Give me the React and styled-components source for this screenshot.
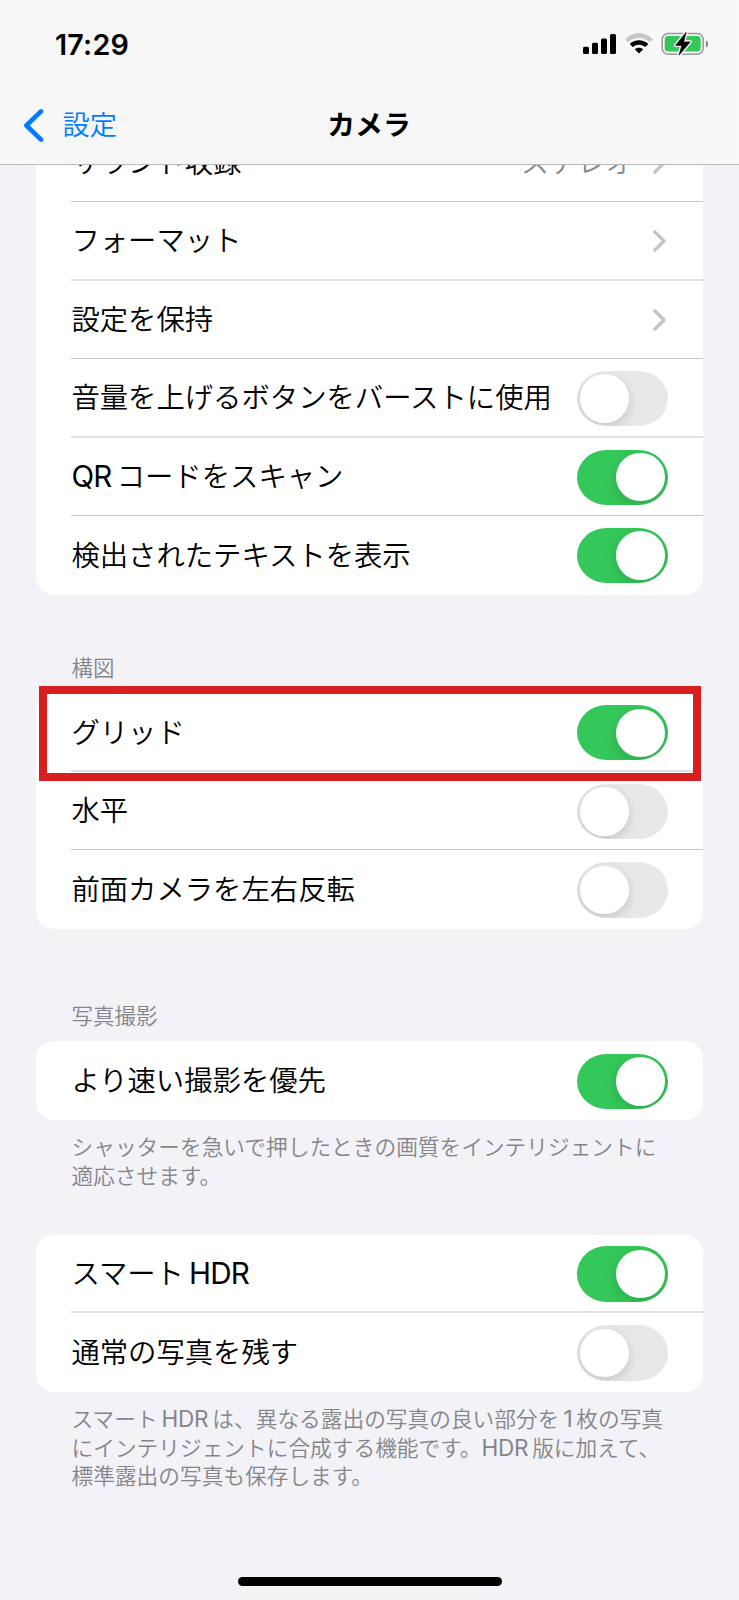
import React from "react";
import styled, { createGlobalStyle, css } from "styled-components";

const sections = [
  {
    id: "record",
    rows: [
      { label: "サウンド収録", value: "ステレオ", type: "link" },
      { label: "フォーマット", type: "link", soft: true },
      { label: "設定を保持", type: "link" },
      { label: "音量を上げるボタンをバーストに使用", type: "switch", soft: true },
      { latin: "QR", label: "コードをスキャン", type: "switch", on: true },
      { label: "検出されたテキストを表示", type: "switch", on: true },
    ],
  },
  {
    id: "composition",
    title: "構図",
    gap: 62.3,
    rows: [
      { label: "グリッド", type: "switch", on: true, marked: true, soft: true },
      { label: "水平", type: "switch" },
      { label: "前面カメラを左右反転", type: "switch" },
    ],
  },
  {
    id: "capture",
    title: "写真撮影",
    gap: 76,
    rows: [{ label: "より速い撮影を優先", type: "switch", on: true }],
    note: (
      <>
        シャッターを急いで押したときの画質をインテリジェントに
        <br />
        適応させます。
      </>
    ),
  },
  {
    id: "hdr",
    gap: 44.2,
    rows: [
      { label: "スマート", latinEnd: "HDR", type: "switch", on: true, soft: true },
      { label: "通常の写真を残す", type: "switch" },
    ],
    note: (
      <>
        スマート<NoteLatin>HDR</NoteLatin>は、異なる露出の写真の良い部分を
        <NoteLatin>1</NoteLatin>枚の写真
        <br />
        にインテリジェントに合成する機能です。<NoteLatin $flush>HDR</NoteLatin>
        版に加えて、
        <br />
        標準露出の写真も保存します。
      </>
    ),
  },
];

function NoteLatin(props) {
  return <Latin $small {...props} />;
}

const StatusIcons = () => (
  <Icons>
    <svg width="34" height="22" viewBox="0 0 34 22">
      <rect x="0" y="13.8" width="6" height="7.2" rx="1.5" />
      <rect x="9" y="9.8" width="6" height="11.2" rx="1.5" />
      <rect x="18" y="5.6" width="6" height="15.4" rx="1.5" />
      <rect x="27" y="1" width="6" height="20" rx="1.5" />
    </svg>
    <svg width="28" height="22" viewBox="0 0 28 22">
      <path
        d="M0.2 6.2C8-1.6 20-1.6 27.8 6.2L24.9 9.3C18.6 3.2 9.4 3.2 3.1 9.3Z"
        fill="#c6c6c7"
      />
      <path d="M4.7 11C9.9 6 18.1 6 23.3 11L20.3 14.1C16.7 10.8 11.3 10.8 7.7 14.1Z" />
      <path d="M9.8 16.2C12.2 14.2 15.8 14.2 18.2 16.2L14 20.6Z" />
    </svg>
    <svg width="48" height="26" viewBox="0 0 48 26">
      <rect
        x="1.2"
        y="2.4"
        width="41"
        height="20.8"
        rx="6"
        fill="none"
        stroke="#98989a"
        strokeWidth="1.5"
      />
      <rect x="3.7" y="5" width="36" height="15.6" rx="3.5" fill="#34c759" />
      <path d="M44.8 9.2C48 10.6 48 15 44.8 16.4Z" fill="#8b8b8d" />
      <path
        d="M25.2 1.2L14.5 14.4H20.8L18 24.2L29.2 10.9H22.7Z"
        stroke="#f7f7f7"
        strokeWidth="3.4"
        strokeLinejoin="round"
      />
      <path
        d="M25.2 1.2L14.5 14.4H20.8L18 24.2L29.2 10.9H22.7Z"
        stroke="#000"
        strokeWidth="0.6"
        strokeLinejoin="round"
      />
    </svg>
  </Icons>
);

const Chevron = () => (
  <ChevronIcon width="15" height="24" viewBox="0 0 15 24" fill="none">
    <path
      d="M2.8 2.9L12 12L2.8 21.1"
      stroke="#c4c4c6"
      strokeWidth="3.4"
      strokeLinecap="round"
      strokeLinejoin="round"
    />
  </ChevronIcon>
);

const SettingRow = ({
  label,
  latin,
  latinEnd,
  value,
  type,
  on,
  soft,
  marked,
  last,
}) => (
  <Row>
    <RowBody $last={last} $soft={soft}>
      <Label>
        {latin && <Latin $lead>{latin}</Latin>}
        {label}
        {latinEnd && <Latin>{latinEnd}</Latin>}
      </Label>
      {value && <Value>{value}</Value>}
      {type === "link" ? (
        <Chevron />
      ) : (
        <Switch type="button" role="switch" aria-checked={!!on} $on={on}>
          <Knob />
        </Switch>
      )}
    </RowBody>
    {marked && <Marker />}
  </Row>
);

const App = () => {
  return (
    <Screen>
      <GlobalStyle />
      <Header>
        <StatusBar>
          <Time>17:29</Time>
          <StatusIcons />
        </StatusBar>
        <NavBar>
          <Back>
            <svg width="22" height="36" viewBox="0 0 22 36" fill="none">
              <path
                d="M19 3.4L4.4 17.5L19 31.6"
                stroke="#007aff"
                strokeWidth="4.6"
                strokeLinecap="round"
                strokeLinejoin="round"
              />
            </svg>
            設定
          </Back>
          <Title>カメラ</Title>
        </NavBar>
      </Header>
      <Content>
        {sections.map(({ id, title, gap, rows, note }) => (
          <Section key={id} $gap={gap}>
            {title && <SectionTitle>{title}</SectionTitle>}
            <Card>
              {rows.map((row, i) => (
                <SettingRow
                  key={row.label}
                  {...row}
                  last={i === rows.length - 1}
                />
              ))}
            </Card>
            {note && <Note>{note}</Note>}
          </Section>
        ))}
      </Content>
      <Footer>
        <HomeIndicator />
      </Footer>
    </Screen>
  );
};

const GlobalStyle = createGlobalStyle`
  body {
    margin: 0;
    background: #f2f2f7;
  }

  * {
    box-sizing: border-box;
  }
`;

const Screen = styled.div`
  display: flex;
  flex-direction: column;
  width: 739px;
  height: 1600px;
  overflow: hidden;
  background: #f2f2f7;
  color: #000;
  font-family: "Inter", "Noto Sans CJK JP", sans-serif;
  font-size: 28.35px;
  font-weight: 350;
  line-height: 1;
`;

const Header = styled.header`
  position: relative;
  z-index: 1;
  flex: none;
  height: 165px;
  background: linear-gradient(90deg, #f9f9fb, #f6f6f6 12%, #f7f7f7 92%, #f9f9fa);
  border-bottom: 1px solid #b9b9bb;
`;

const StatusBar = styled.div`
  display: flex;
  align-items: center;
  justify-content: space-between;
  height: 88px;
  padding: 0 30px 0 55px;
`;

const Time = styled.span`
  padding-top: 2px;
  font-size: 28.7px;
  font-weight: 560;
  letter-spacing: 0.2px;
`;

const Icons = styled.div`
  display: flex;
  align-items: center;
  gap: 8px;
`;

const NavBar = styled.nav`
  display: grid;
  grid-template-columns: 1fr auto 1fr;
  align-items: center;
  height: 75px;
  padding: 0 22px;
`;

const Back = styled.a`
  display: flex;
  align-items: center;
  gap: 18.5px;
  color: #007aff;
  font-size: 27.2px;
`;

const Title = styled.h1`
  margin: 0;
  padding: 1px 1px 0 0;
  font-size: 27.8px;
  font-weight: 700;
`;

const Content = styled.main`
  flex: 1;
  /* list is scrolled partly beneath the header */
  margin-top: -41.5px;
  padding: 0 36px;
`;

const Section = styled.section`
  margin-top: ${({ $gap = 0 }) => $gap}px;
`;

const SectionTitle = styled.h2`
  margin: 0;
  padding: 0 35.5px;
  height: 36.6px;
  color: #85858b;
  font-size: 21.5px;
  font-weight: 350;
  line-height: 23px;
`;

const Card = styled.div`
  background: #fff;
  border-radius: 18px;
`;

const Row = styled.div`
  position: relative;
  height: 78.5px;
  padding-left: 35.4px;
`;

const RowBody = styled.div`
  display: flex;
  align-items: center;
  height: 100%;
  padding: ${({ $last, $soft }) => ($last ? "1px" : $soft ? "2.4px" : "1.8px")}
    35.2px 0 0;
  ${({ $last, $soft }) =>
    !$last &&
    css`
      border-bottom: ${$soft ? "2px solid #e2e2e4" : "1px solid #c6c6c8"};
    `}
`;

const Label = styled.span`
  flex: 1;
  white-space: nowrap;
`;

const Value = styled.span`
  margin-right: 18px;
  color: #8a8a8e;
`;

const ChevronIcon = styled.svg`
  flex: none;
  margin-right: 0.8px;
`;

const Latin = styled.span`
  margin-left: 5px;
  font-size: 29.6px;
  font-weight: 380;
  letter-spacing: -0.7px;
  ${({ $lead }) =>
    $lead &&
    css`
      margin: 0 5px 0 0;
    `}
  ${({ $small, $flush }) =>
    $small &&
    css`
      margin: 0 4px 0 ${$flush ? 0 : "4px"};
      font-size: 22.6px;
      letter-spacing: -0.3px;
    `}
`;

const Switch = styled.button`
  flex: none;
  display: flex;
  align-items: center;
  justify-content: ${({ $on }) => ($on ? "flex-end" : "flex-start")};
  width: 91px;
  height: 55.3px;
  padding: 3.3px;
  border: 0;
  border-radius: 30px / 27.6px;
  background: ${({ $on }) => ($on ? "#34c759" : "#e8e8e8")};
  overflow: hidden;
`;

const Knob = styled.span`
  width: 48.6px;
  height: 48.6px;
  border-radius: 50%;
  background: #fff;
  box-shadow: 0 4px 12px rgba(0, 0, 0, 0.15);
`;

const Marker = styled.div`
  position: absolute;
  z-index: 1;
  top: -7.6px;
  left: 2.5px;
  right: 2.4px;
  height: 95.6px;
  border: 8px solid #d71f1f;
`;

const Note = styled.p`
  margin: 0;
  padding: 13.5px 0 0 35.5px;
  color: #85858b;
  font-size: 21.7px;
  line-height: 28.5px;
  white-space: nowrap;
`;

const Footer = styled.footer`
  display: flex;
  justify-content: center;
  flex: none;
  height: 23px;
`;

const HomeIndicator = styled.div`
  width: 264px;
  height: 8.6px;
  border-radius: 5px;
  background: #000;
`;

export default App;
